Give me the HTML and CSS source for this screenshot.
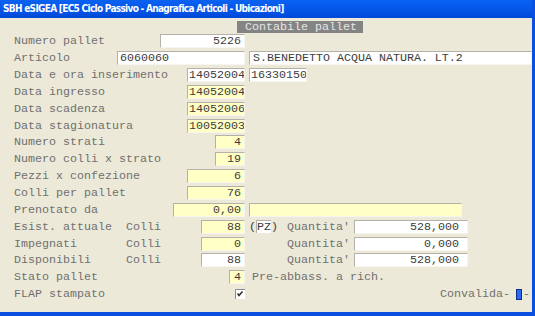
FILE: index.html
```html
<!DOCTYPE html>
<html lang="it">
<head>
  <meta charset="UTF-8">
  <title>Anagrafica Articoli - Ubicazioni</title>
  <link rel="stylesheet" href="styles.css">
</head>
<body>
  <div class="window">
    <div class="titlebar">SBH eSIGEA [EC5 Ciclo Passivo - Anagrafica Articoli - Ubicazioni]</div>
    <div class="content">
      <div class="section"><span class="section-title">Contabile pallet</span></div>

      <div class="row">
        <div class="left"><span class="label">Numero pallet</span><span class="field num w85">5226</span></div>
      </div>
      <div class="row">
        <div class="left"><span class="label">Articolo</span><span class="field w128">6060060</span></div>
        <div class="right"><span class="field grow">S.BENEDETTO ACQUA NATURA. LT.2</span></div>
      </div>
      <div class="row">
        <div class="left"><span class="label">Data e ora inserimento</span><span class="field date">14052004</span></div>
        <div class="right"><span class="field date">16330150</span></div>
      </div>
      <div class="row">
        <div class="left"><span class="label">Data ingresso</span><span class="field yellow date">14052004</span></div>
      </div>
      <div class="row">
        <div class="left"><span class="label">Data scadenza</span><span class="field yellow date">14052006</span></div>
      </div>
      <div class="row">
        <div class="left"><span class="label">Data stagionatura</span><span class="field yellow date">10052003</span></div>
      </div>
      <div class="row">
        <div class="left"><span class="label">Numero strati</span><span class="field yellow num w30">4</span></div>
      </div>
      <div class="row">
        <div class="left"><span class="label">Numero colli x strato</span><span class="field yellow num w30">19</span></div>
      </div>
      <div class="row">
        <div class="left"><span class="label">Pezzi x confezione</span><span class="field yellow num w58">6</span></div>
      </div>
      <div class="row">
        <div class="left"><span class="label">Colli per pallet</span><span class="field yellow num w58">76</span></div>
      </div>
      <div class="row">
        <div class="left"><span class="label">Prenotato da</span><span class="field yellow num w72">0,00</span></div>
        <div class="right"><span class="field yellow w213"></span></div>
      </div>
      <div class="row">
        <div class="left"><span class="label">Esist. attuale  Colli</span><span class="field yellow num w44">88</span></div>
        <div class="right">
          <span class="unit">(<span class="field unit-box">PZ</span>)</span>
          <span class="label">Quantita'</span><span class="field num qty">528,000</span>
        </div>
      </div>
      <div class="row">
        <div class="left"><span class="label">Impegnati       Colli</span><span class="field yellow num w44">0</span></div>
        <div class="right">
          <span class="unit"></span>
          <span class="label">Quantita'</span><span class="field num qty">0,000</span>
        </div>
      </div>
      <div class="row">
        <div class="left"><span class="label">Disponibili     Colli</span><span class="field num w44">88</span></div>
        <div class="right">
          <span class="unit"></span>
          <span class="label">Quantita'</span><span class="field num qty">528,000</span>
        </div>
      </div>
      <div class="row">
        <div class="left"><span class="label">Stato pallet</span><span class="field yellow num w16">4</span></div>
        <div class="right"><span class="label note">Pre-abbass. a rich.</span></div>
      </div>
      <div class="row">
        <div class="left">
          <span class="label">FLAP stampato</span>
          <svg class="check" width="10" height="10" viewBox="0 0 10 10">
            <rect x="0" y="0" width="10" height="10" fill="#ffffff"/>
            <path d="M0.5 10V0.5H10" fill="none" stroke="#8a8a8a"/>
            <path d="M2.5 4.5L4 6.5L7.5 2.5" fill="none" stroke="#303030" stroke-width="1.6"/>
          </svg>
        </div>
        <div class="right end">
          <span class="label">Convalida-</span><span class="cursor"></span><span class="label">-</span>
        </div>
      </div>
    </div>
  </div>
</body>
</html>
```

FILE: styles.css
```css
body {
  margin: 0;
  padding: 0;
  background-color: #ece9d8;
}
.window {
  width: 535px;
  height: 316px;
  box-sizing: border-box;
  background-color: #ece9d8;
  border-right: 3px solid #0a4fe0;
  border-bottom: 4px solid #0a4fe0;
  overflow: hidden;
}
.titlebar {
  height: 18px;
  margin-right: -3px;
  padding-left: 3px;
  background: linear-gradient(#0a62f2, #0454e6 60%, #0048d8);
  color: #ffffff;
  font-family: "DejaVu Sans Condensed", "DejaVu Sans", sans-serif;
  font-weight: bold;
  font-size: 10px;
  letter-spacing: -0.7px;
  line-height: 17px;
  white-space: nowrap;
}
.content {
  font-family: "Liberation Mono", "Courier New", monospace;
  font-size: 11.67px;
  color: #707070;
}
.section {
  height: 12px;
  margin-top: 2px;
  margin-bottom: 1px;
}
.section-title {
  display: inline-block;
  margin-left: 237px;
  width: 126px;
  height: 12px;
  line-height: 12px;
  padding-left: 8px;
  box-sizing: border-box;
  background-color: #848484;
  color: #e6e6e6;
}
.row {
  display: flex;
  align-items: center;
  height: 16.85px;
}
.left {
  width: 245px;
  box-sizing: border-box;
  padding-left: 14px;
  display: flex;
  align-items: center;
  justify-content: space-between;
}
.right {
  flex: 1;
  margin-left: 4px;
  display: flex;
  align-items: center;
}
.right.end {
  justify-content: flex-end;
  padding-right: 2px;
}
.label {
  white-space: pre;
}
.note {
  margin-left: 3px;
}
.field {
  display: inline-block;
  box-sizing: border-box;
  height: 14px;
  line-height: 12px;
  padding: 0 2px;
  background-color: #ffffff;
  color: #3c3c3c;
  border-top: 1px solid #b4b2a8;
  border-left: 1px solid #b4b2a8;
  border-right: 1px solid #f6f5ef;
  border-bottom: 1px solid #f6f5ef;
  white-space: pre;
  overflow: hidden;
}
.yellow {
  background-color: #ffffc6;
}
.num {
  text-align: right;
  padding-right: 3px;
}
.date {
  width: 58px;
  padding: 0 1px;
}
.grow {
  flex: 1;
  padding-left: 3px;
}
.w16 { width: 16px; }
.w30 { width: 30px; }
.w44 { width: 44px; }
.w58 { width: 58px; }
.w72 { width: 72px; }
.w85 { width: 85px; }
.w128 { width: 128px; }
.w213 { width: 213px; }
.unit {
  width: 38px;
  display: flex;
  align-items: center;
  color: #3c3c3c;
}
.unit-box {
  height: 13px;
  padding: 0;
  border-right: none;
  border-bottom: none;
}
.qty {
  width: 114px;
  margin-left: 4px;
  padding-right: 8px;
}
.cursor {
  display: inline-block;
  width: 6px;
  height: 11px;
  margin: 0 1px 0 6px;
  background-color: #2a6af0;
  border: 1px solid #0c2f8a;
  box-sizing: border-box;
}
```
